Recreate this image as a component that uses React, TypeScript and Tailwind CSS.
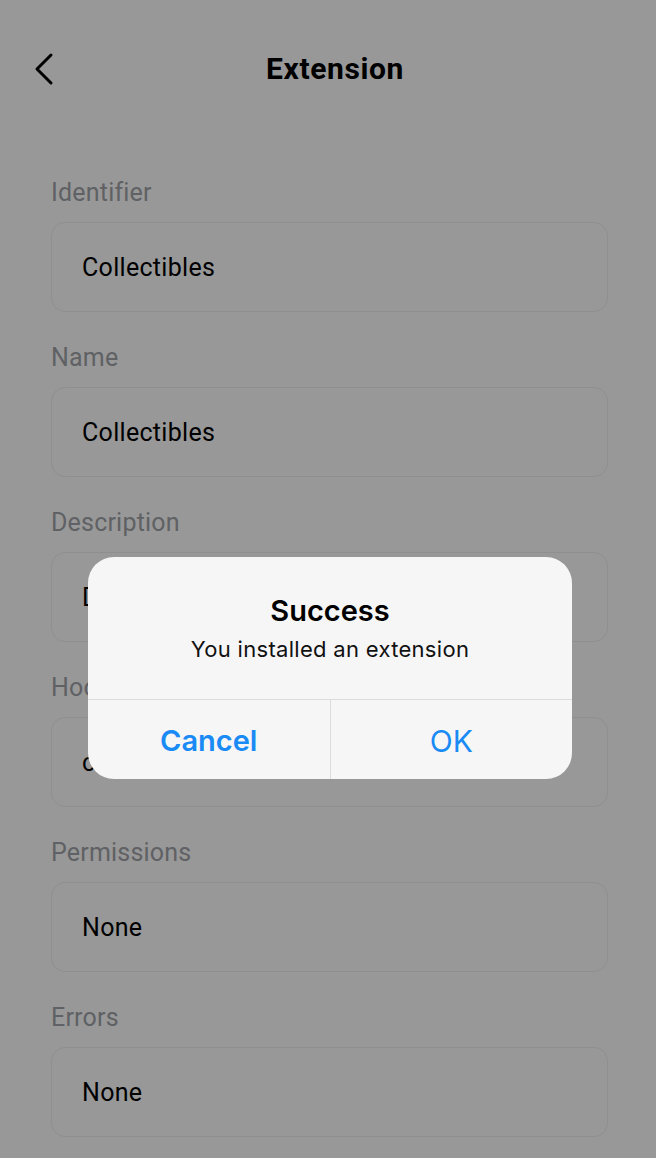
const fields = [
  { label: "Identifier", value: "Collectibles" },
  { label: "Name", value: "Collectibles" },
  { label: "Description", value: "Display your collectibles" },
  { label: "Hooks", value: "collectibles" },
  { label: "Permissions", value: "None" },
  { label: "Errors", value: "None" },
];

function BackIcon() {
  return (
    <svg width="24" height="34" viewBox="0 0 24 34" fill="none">
      <path
        d="M18 3 L4 17 L18 31"
        stroke="#000"
        strokeWidth="3"
        strokeLinecap="round"
        strokeLinejoin="round"
      />
    </svg>
  );
}

function Field({ label, value }: { label: string; value: string }) {
  return (
    <div className="flex flex-col">
      <div className="h-[45px] flex items-center text-[25px] tracking-[0.2px] text-[#5f6164] pt-[4px]">
        {label}
      </div>
      <div className="mt-[9px] h-[90px] rounded-[14px] border border-[#8f8f8f] flex items-center px-[30px] pt-[2px] text-[25px] tracking-[0.3px] text-black">
        {value}
      </div>
    </div>
  );
}

export default function App() {
  return (
    <div
      className="relative w-[656px] h-[1158px] bg-[#989898] overflow-hidden"
      style={{ fontFamily: "Roboto, 'Noto Sans', sans-serif" }}
    >
      <header className="relative h-[138px] flex items-start justify-center pt-[50px]">
        <button className="absolute left-[33px] top-[52px]">
          <BackIcon />
        </button>
        <h1 className="text-[30px] font-bold text-black leading-[38px] tracking-[0.6px] ml-[14px]">
          Extension
        </h1>
      </header>

      <div className="flex flex-col gap-[21px] pl-[51px] pr-[48px] mt-[30px]">
        {fields.map((f) => (
          <Field key={f.label} label={f.label} value={f.value} />
        ))}
      </div>

      <div className="absolute inset-0 flex pt-[557px] pl-[88px]">
        <div
          className="w-[484px] h-[222px] rounded-[26px] bg-[#f6f6f6] flex flex-col overflow-hidden"
          style={{ fontFamily: "Inter, Roboto, sans-serif" }}
        >
          <div className="h-[143px] flex flex-col items-center pt-[35px] border-b border-[#dcdcdc]">
            <div className="text-[29px] font-semibold text-black leading-[38px]">
              Success
            </div>
            <div className="text-[22px] text-[#111] leading-[28px] mt-[5px] tracking-[0.3px]">
              You installed an extension
            </div>
          </div>
          <div className="flex flex-1">
            <button className="flex-1 flex items-center justify-center pt-[3px] text-[29px] font-semibold text-[#1a8af5] border-r border-[#dcdcdc]">
              Cancel
            </button>
            <button className="flex-1 flex items-center justify-center pt-[3px] text-[30px] text-[#1a8af5]">
              OK
            </button>
          </div>
        </div>
      </div>
    </div>
  );
}
